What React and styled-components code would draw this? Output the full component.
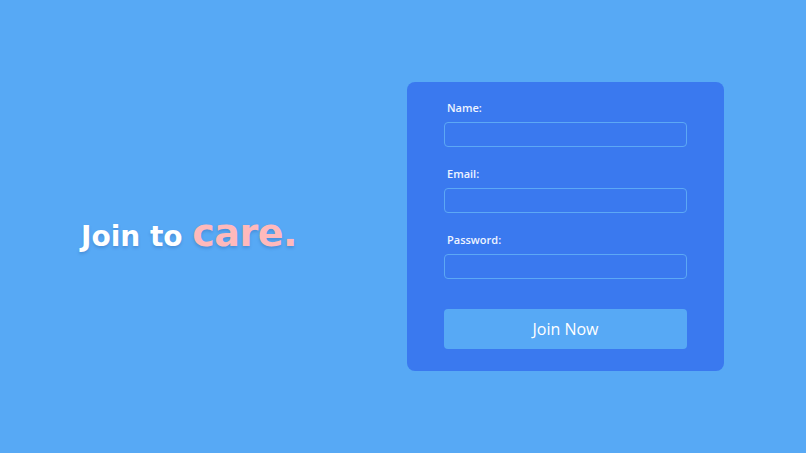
import styled, { createGlobalStyle } from 'styled-components';

const GlobalStyle = createGlobalStyle`
  html, body {
    margin: 0;
    padding: 0;
    background: #57a9f5;
  }
  * {
    box-sizing: border-box;
  }
`;

const fields = [
  { id: 'name', label: 'Name:', type: 'text' },
  { id: 'email', label: 'Email:', type: 'email' },
  { id: 'password', label: 'Password:', type: 'password' },
];

const App = () => {
  return (
    <>
      <GlobalStyle />
      <Page>
        <Headline>
          Join to <Accent>care.</Accent>
        </Headline>
        <Card onSubmit={(e) => e.preventDefault()}>
          {fields.map((field) => (
            <Field key={field.id}>
              <Label htmlFor={field.id}>{field.label}</Label>
              <Input id={field.id} type={field.type} />
            </Field>
          ))}
          <SubmitButton type="submit">Join Now</SubmitButton>
        </Card>
      </Page>
    </>
  );
};

const Page = styled.main`
  display: flex;
  align-items: center;
  justify-content: space-between;
  height: 453px;
  padding: 0 82px 0 81px;
  font-family: 'Open Sans', 'Liberation Sans', sans-serif;
`;

const Headline = styled.h1`
  margin: 12px 0 0;
  color: #ffffff;
  font-family: 'DejaVu Sans', sans-serif;
  font-size: 28px;
  font-weight: 700;
  text-shadow: 0 2px 3px rgba(30, 70, 140, 0.25);
`;

const Accent = styled.span`
  color: #ffb9bb;
  font-size: 38px;
  letter-spacing: -0.5px;
`;

const Card = styled.form`
  display: flex;
  flex-direction: column;
  width: 317px;
  height: 289px;
  padding: 18px 37px 22px;
  background: #3a79ef;
  border-radius: 8px;
`;

const Field = styled.div`
  display: flex;
  flex-direction: column;
  margin-bottom: 19px;
  &:nth-of-type(3) {
    margin-bottom: 30px;
  }
`;

const Label = styled.label`
  height: 16px;
  margin: 0 0 6px 3px;
  color: #eef4ff;
  font-size: 11px;
  font-weight: 600;
  line-height: 16px;
`;

const Input = styled.input`
  height: 25px;
  padding: 0 8px;
  background: transparent;
  border: 1px solid #5ca8f5;
  border-radius: 4px;
  color: #ffffff;
  outline: none;
`;

const SubmitButton = styled.button`
  height: 40px;
  background: #57a9f5;
  border: none;
  border-radius: 4px;
  color: #ffffff;
  font-family: inherit;
  font-size: 16px;
  font-weight: 400;
  cursor: pointer;
`;

export default App;
